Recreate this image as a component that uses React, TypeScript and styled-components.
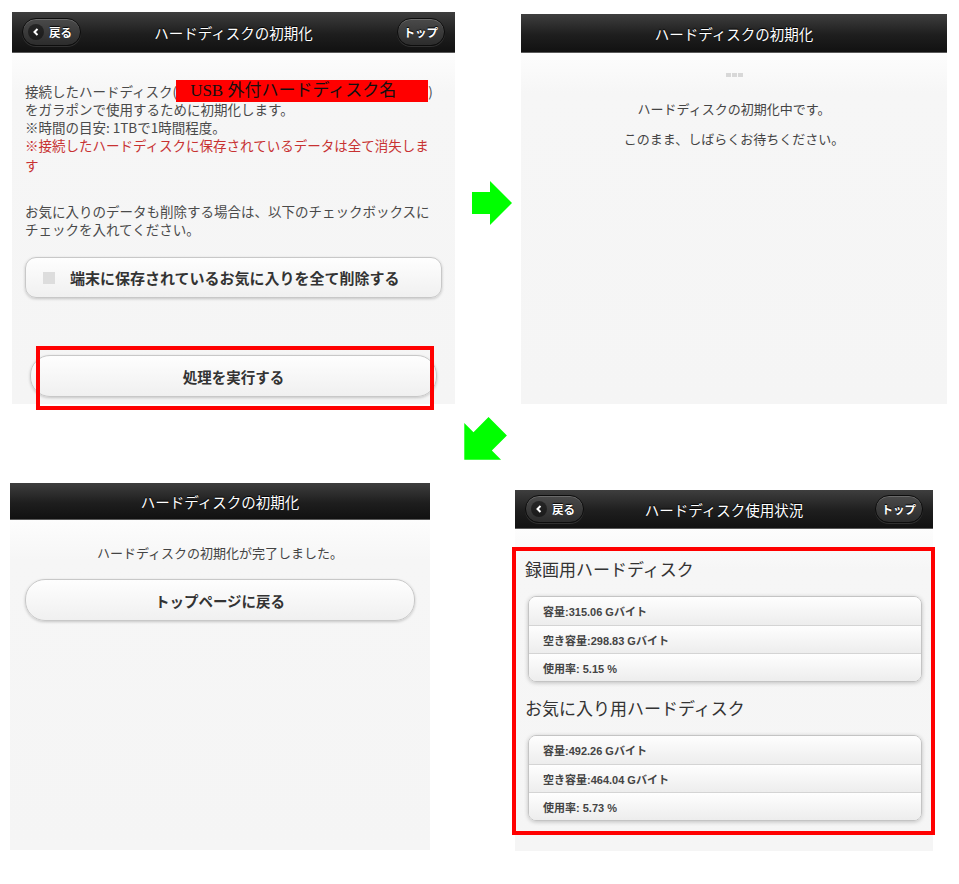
import styled, { createGlobalStyle } from 'styled-components';
import { FC, ReactNode } from 'react';

const GlobalStyle = createGlobalStyle`
  html, body {
    margin: 0;
    padding: 0;
    background: #ffffff;
  }
  body {
    font-family: "Noto Sans CJK JP", "Noto Sans", sans-serif;
    color: #333333;
  }
`;

const Page = styled.div`
  width: 959px;
  height: 884px;
  overflow: hidden;
  display: flex;
  flex-direction: column;
`;

const TopRow = styled.div`
  display: flex;
  align-items: flex-start;
  padding: 12px 0 0 12px;
`;

const MiddleRow = styled.div`
  height: 79px;
  padding: 13px 0 0 455px;
  box-sizing: border-box;
`;

const BottomRow = styled.div`
  display: flex;
  align-items: flex-start;
  gap: 85px;
  padding-left: 10px;
`;

const ArrowSlot = styled.div`
  width: 66px;
  padding: 169px 0 0 15px;
  box-sizing: border-box;
`;

const Screen = styled.div<{ $w: number; $h: number; $top?: number }>`
  width: ${(p) => p.$w}px;
  height: ${(p) => p.$h}px;
  margin-top: ${(p) => p.$top ?? 0}px;
  display: flex;
  flex-direction: column;
`;

const Bar = styled.div<{ $h: number }>`
  height: ${(p) => p.$h}px;
  flex-shrink: 0;
  display: grid;
  grid-template-columns: 1fr auto 1fr;
  align-items: center;
  padding: 0 10px;
  box-sizing: border-box;
  background: linear-gradient(#3e3e3e, #1e1e1e 55%, #111111);
  border-bottom: 1px solid #5a5a5a;
`;

const BarTitle = styled.div`
  color: #ffffff;
  font-size: 14.5px;
  text-shadow: 0 -1px 1px #000000;
  white-space: nowrap;
`;

const BarSide = styled.div<{ $side: 'start' | 'end' }>`
  display: flex;
  justify-content: ${(p) => (p.$side === 'end' ? 'flex-end' : 'flex-start')};
`;

const BarButton = styled.div<{ $icon?: boolean }>`
  height: 28px;
  box-sizing: border-box;
  display: flex;
  align-items: center;
  gap: 5px;
  padding: ${(p) => (p.$icon ? '0 8px 0 5px' : '0 6px')};
  border-radius: 14px;
  border: 1px solid #0d0d0d;
  background: linear-gradient(#4a4a4a, #2c2c2c);
  box-shadow: inset 0 1px 0 rgba(255, 255, 255, 0.18), 0 1px 0 rgba(255, 255, 255, 0.12);
  color: #ffffff;
  font-size: 11.5px;
  font-weight: 700;
  text-shadow: 0 -1px 1px #000000;
`;

const BackIcon = styled.span`
  width: 16px;
  height: 16px;
  border-radius: 50%;
  background: rgba(0, 0, 0, 0.45);
  display: flex;
  align-items: center;
  justify-content: center;
`;

const Body = styled.div<{ $pad?: string }>`
  flex: 1;
  padding: ${(p) => p.$pad ?? '0'};
  box-sizing: border-box;
  background: linear-gradient(#fdfdfd, #f6f6f6 40px, #f5f5f5);
  display: flex;
  flex-direction: column;
`;

const Para = styled.p<{ $mt?: number; $warn?: boolean }>`
  margin: ${(p) => p.$mt ?? 0}px 0 0;
  font-size: 13.5px;
  line-height: ${(p) => (p.$warn ? 20 : 18)}px;
  color: ${(p) => (p.$warn ? '#c83232' : '#4a4a4a')};
  white-space: nowrap;
`;

const NameMask = styled.span`
  display: inline-block;
  vertical-align: top;
  width: 252px;
  height: 22px;
  margin: -2px 0 -2px -1px;
  padding-left: 14px;
  box-sizing: border-box;
  background: #ff0000;
  color: #111111;
  font-family: "Liberation Serif", "Noto Sans CJK JP", serif;
  font-size: 17px;
  line-height: 22px;
  white-space: nowrap;
`;

const ListButton = styled.div<{ $h: number }>`
  height: ${(p) => p.$h}px;
  box-sizing: border-box;
  display: flex;
  align-items: center;
  border: 1px solid #c8c8c8;
  border-radius: 14px;
  background: linear-gradient(#fefefe, #f0f0f0);
  box-shadow: 0 1px 3px rgba(0, 0, 0, 0.2);
  font-size: 14.5px;
  font-weight: 700;
  color: #333333;
`;

const CheckRow = styled(ListButton)`
  padding-left: 17px;
  gap: 15px;
  border-radius: 11px;
  font-size: 15px;
`;

const CheckBox = styled.span`
  width: 12px;
  height: 12px;
  background: #dddddd;
`;

const CenterButton = styled(ListButton)`
  justify-content: center;
  border-radius: 20px;
`;

const Highlight = styled.div`
  position: relative;
`;

const RedFrame = styled.div`
  position: absolute;
  top: -9px;
  bottom: -13px;
  left: 6px;
  right: 3px;
  border: 4px solid #ff0000;
`;

const CenterText = styled.p<{ $mt: number }>`
  margin: ${(p) => p.$mt}px 0 0;
  text-align: center;
  font-size: 13px;
  line-height: 20px;
  color: #444444;
`;

const Dots = styled.div`
  display: flex;
  justify-content: center;
  gap: 1px;
  margin-top: 20px;
  span {
    width: 5px;
    height: 4px;
    background: #d8d8d8;
  }
`;

const UsageFrame = styled.div`
  margin: 18px -2px 0 -3px;
  border: 4px solid #ff0000;
  padding: 6px 9px 10px 12px;
  display: flex;
  flex-direction: column;
`;

const SectionTitle = styled.h3<{ $mt: number }>`
  margin: ${(p) => p.$mt}px 0 0 -3px;
  font-size: 17px;
  line-height: 24px;
  font-weight: 400;
  color: #333333;
`;

const InfoList = styled.div`
  margin-top: 15px;
  border: 1px solid #c4c4c4;
  border-radius: 8px;
  overflow: hidden;
  box-shadow: 0 1px 4px rgba(0, 0, 0, 0.22);
`;

const InfoRow = styled.div`
  height: 28px;
  box-sizing: border-box;
  display: flex;
  align-items: center;
  padding-left: 14px;
  background: linear-gradient(#fefefe, #ededed);
  font-family: "Liberation Sans", "Noto Sans CJK JP", sans-serif;
  font-size: 11px;
  font-weight: 700;
  color: #444444;
  & + & {
    border-top: 1px solid #d4d4d4;
  }
`;

const Arrow: FC<{ size: number; angle: number }> = ({ size, angle }) => (
  <svg width={size} height={size} viewBox="0 0 44 44">
    <polygon
      points="2,11 20,11 20,0 42,22 20,44 20,33 2,33"
      fill="#00ff00"
      transform={`rotate(${angle} 22 22)`}
    />
  </svg>
);

type HeaderProps = { title: string; height: number; buttons?: boolean };

const Header: FC<HeaderProps> = ({ title, height, buttons }) => (
  <Bar $h={height}>
    <BarSide $side="start">
      {buttons && (
        <BarButton $icon>
          <BackIcon>
            <svg width="8" height="8" viewBox="0 0 8 8">
              <path d="M5.5 1 L2.5 4 L5.5 7" stroke="#fff" strokeWidth="2" fill="none" />
            </svg>
          </BackIcon>
          戻る
        </BarButton>
      )}
    </BarSide>
    <BarTitle>{title}</BarTitle>
    <BarSide $side="end">{buttons && <BarButton>トップ</BarButton>}</BarSide>
  </Bar>
);

const Usage: FC<{ title: string; rows: string[]; mt: number }> = ({ title, rows, mt }) => (
  <>
    <SectionTitle $mt={mt}>{title}</SectionTitle>
    <InfoList>
      {rows.map((r) => (
        <InfoRow key={r}>{r}</InfoRow>
      ))}
    </InfoList>
  </>
);

const Panel: FC<{ w: number; h: number; top?: number; children: ReactNode }> = ({ w, h, top, children }) => (
  <Screen $w={w} $h={h} $top={top}>
    {children}
  </Screen>
);

export default function App() {
  return (
    <Page>
      <GlobalStyle />
      <TopRow>
        <Panel w={443} h={392}>
          <Header title="ハードディスクの初期化" height={41} buttons />
          <Body $pad="29px 13px 0 13px">
            <Para>
              接続したハードディスク(<NameMask>USB 外付ハードディスク名</NameMask>)
              <br />
              をガラポンで使用するために初期化します。
              <br />
              ※時間の目安: 1TBで1時間程度。
            </Para>
            <Para $warn $mt={-1}>
              ※接続したハードディスクに保存されているデータは全て消失しま
              <br />す
            </Para>
            <Para $mt={27}>
              お気に入りのデータも削除する場合は、以下のチェックボックスに
              <br />
              チェックを入れてください。
            </Para>
            <CheckRow $h={41} style={{ marginTop: 19 }}>
              <CheckBox />
              端末に保存されているお気に入りを全て削除する
            </CheckRow>
            <Highlight style={{ margin: '57px 5px 0 5px' }}>
              <CenterButton $h={42}>処理を実行する</CenterButton>
              <RedFrame />
            </Highlight>
          </Body>
        </Panel>
        <ArrowSlot>
          <Arrow size={44} angle={0} />
        </ArrowSlot>
        <Panel w={426} h={390} top={2}>
          <Header title="ハードディスクの初期化" height={39} />
          <Body>
            <Dots>
              <span />
              <span />
              <span />
            </Dots>
            <CenterText $mt={22}>ハードディスクの初期化中です。</CenterText>
            <CenterText $mt={10}>このまま、しばらくお待ちください。</CenterText>
          </Body>
        </Panel>
      </TopRow>
      <MiddleRow>
        <Arrow size={52} angle={135} />
      </MiddleRow>
      <BottomRow>
        <Panel w={420} h={367}>
          <Header title="ハードディスクの初期化" height={37} />
          <Body $pad="0 15px">
            <CenterText $mt={23}>ハードディスクの初期化が完了しました。</CenterText>
            <CenterButton $h={42} style={{ marginTop: 16 }}>
              トップページに戻る
            </CenterButton>
          </Body>
        </Panel>
        <Panel w={418} h={361} top={7}>
          <Header title="ハードディスク使用状況" height={39} buttons />
          <Body>
            <UsageFrame>
              <Usage
                title="録画用ハードディスク"
                mt={0}
                rows={['容量:315.06 Gバイト', '空き容量:298.83 Gバイト', '使用率: 5.15 %']}
              />
              <Usage
                title="お気に入り用ハードディスク"
                mt={14}
                rows={['容量:492.26 Gバイト', '空き容量:464.04 Gバイト', '使用率: 5.73 %']}
              />
            </UsageFrame>
          </Body>
        </Panel>
      </BottomRow>
    </Page>
  );
}
